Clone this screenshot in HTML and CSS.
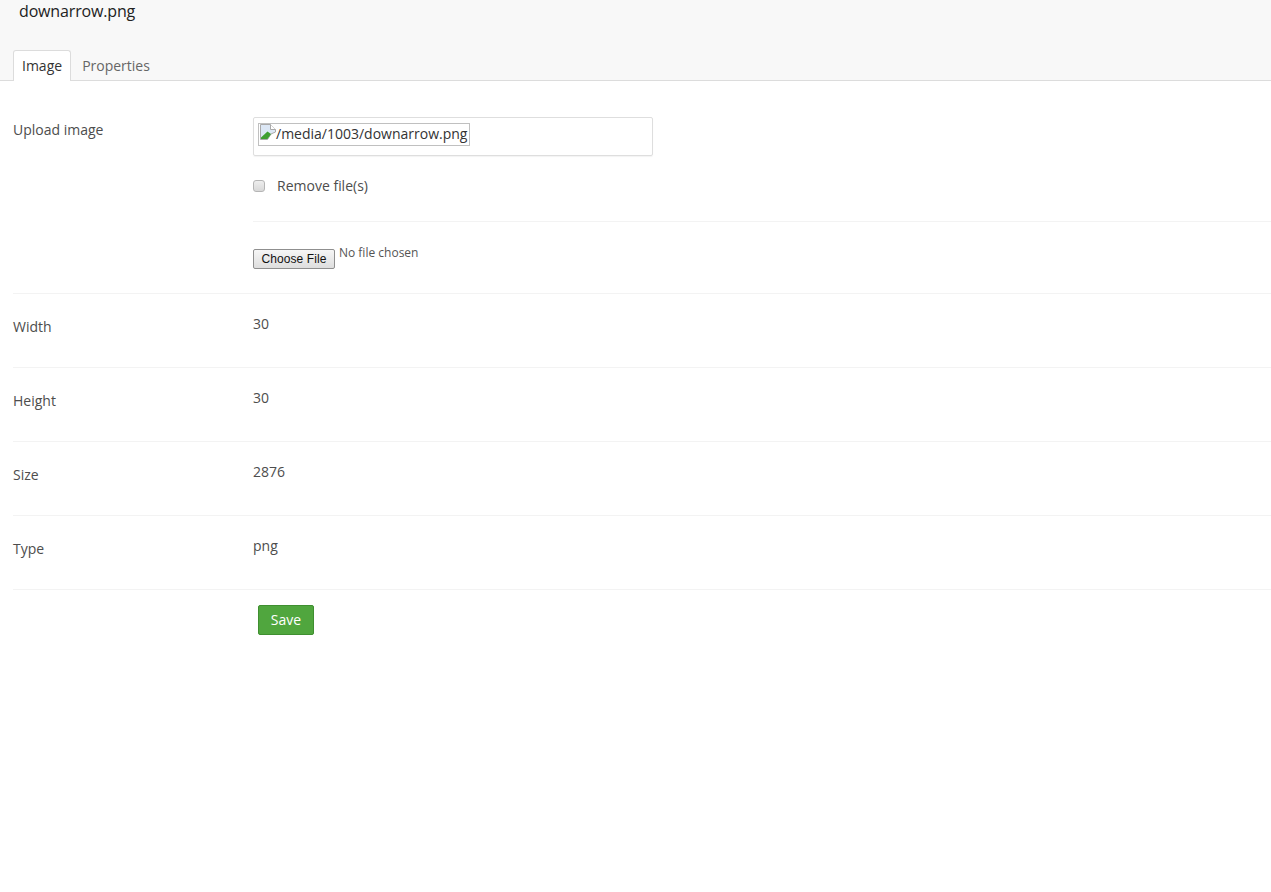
FILE: index.html
```html
<!DOCTYPE html>
<html lang="en">
<head>
<meta charset="utf-8">
<title>downarrow.png</title>
<link rel="stylesheet" href="styles.css">
</head>
<body>
<header class="head">
  <h1 class="title">downarrow.png</h1>
  <nav class="tabs">
    <a class="tab active">Image</a>
    <a class="tab">Properties</a>
  </nav>
</header>
<form class="form">
  <div class="row upload-row">
    <div class="label">Upload image</div>
    <div class="value">
      <div class="preview">
        <span class="broken">
          <svg class="broken-icon" width="16" height="16" viewBox="0 0 16 16">
            <path d="M.5 .5H10.5L15.5 5.5V8L11 10 7.5 15.5H.5Z" fill="#dce7f5" stroke="#a9a9a9"/>
            <path d="M10.5 .5V5.5H15.5" fill="#fff" stroke="#a9a9a9"/>
            <path d="M1 15V13.5L7.5 7.5 11 10 7.5 15Z" fill="#3f9f32"/>
          </svg>/media/1003/downarrow.png</span>
      </div>
      <label class="remove"><input class="check" type="checkbox"><span>Remove file(s)</span></label>
      <div class="file-line">
        <button class="file-btn" type="button">Choose File</button><span class="no-file">No file chosen</span>
      </div>
    </div>
  </div>
  <div class="row"><div class="label">Width</div><div class="value text">30</div></div>
  <div class="row"><div class="label">Height</div><div class="value text">30</div></div>
  <div class="row"><div class="label">Size</div><div class="value text">2876</div></div>
  <div class="row"><div class="label">Type</div><div class="value text">png</div></div>
  <div class="actions"><button class="save" type="button">Save</button></div>
</form>
</body>
</html>
```
FILE: styles.css
```css
html, body { margin: 0; padding: 0; background: #fff; }
body {
  font-family: "Open Sans", sans-serif;
  font-size: 14px;
  line-height: 20px;
  color: #4d4d4d;
  height: 892px;
  overflow: hidden;
}
.head {
  background: #f8f8f8;
  border-bottom: 1px solid #dcdcdc;
  height: 80px;
  display: flex;
  flex-direction: column;
  justify-content: space-between;
  padding-left: 13px;
}
.title {
  margin: 0;
  padding: 0 0 0 6px;
  font-size: 16px;
  font-weight: 400;
  line-height: 22px;
  letter-spacing: -.15px;
  color: #222;
}
.tabs { display: flex; height: 31px; margin-bottom: -1px; }
.tab {
  padding: 5px 8px 0;
  margin-right: 2px;
  border: 1px solid transparent;
  border-bottom: 0;
  color: #666;
  line-height: 20px;
  height: 31px;
  box-sizing: border-box;
}
.tab.active {
  background: #fff;
  border-color: #dcdcdc;
  border-radius: 3px 3px 0 0;
  color: #333;
  height: 31px;
}
.form { margin-left: 13px; }
.row {
  display: flex;
  height: 73px;
  border-bottom: 1px solid #f3f3f3;
}
.upload-row { height: 212px; }
.label { width: 240px; flex: none; padding-top: 23px; color: #4d4d4d; }
.upload-row .label { padding-top: 39px; }
.value { flex: 1; min-width: 0; }
.text { padding-top: 20px; }
.preview {
  box-sizing: border-box;
  width: 400px;
  height: 39px;
  margin-top: 36px;
  padding: 5px 4px;
  border: 1px solid #dedede;
  border-radius: 2px;
  box-shadow: 0 1px 1px rgba(0,0,0,.05);
}
.broken {
  display: inline-flex;
  align-items: flex-start;
  box-sizing: border-box;
  height: 23px;
  padding: 0 2px 0 1px;
  border: 1px solid #c0c0c0;
  color: #333;
  line-height: 20px;
  white-space: nowrap;
}
.broken-icon { flex: none; }
.remove {
  display: flex;
  align-items: center;
  height: 20px;
  margin-top: 20px;
  padding-bottom: 25px;
  border-bottom: 1px solid #f3f3f3;
}
.check {
  appearance: none;
  box-sizing: border-box;
  width: 12px;
  height: 12px;
  margin: 0 12px 0 0;
  border: 1px solid #b5b5b5;
  border-radius: 3px;
  background: linear-gradient(#eee, #d8d8d8);
}
.file-line { display: flex; align-items: flex-start; margin-top: 27px; }
.file-btn {
  box-sizing: border-box;
  width: 82px;
  height: 20px;
  padding: 0;
  border: 1px solid #8f8f8f;
  border-radius: 2px;
  background: linear-gradient(#f6f6f6, #dedede);
  font-family: "Liberation Sans", sans-serif;
  font-size: 12px;
  letter-spacing: .1px;
  line-height: 18px;
  color: #111;
}
.no-file { margin: -4px 0 0 4px; font-size: 12px; line-height: 16px; color: #555; }
.actions { padding: 15px 0 0 245px; }
.save {
  box-sizing: border-box;
  width: 56px;
  height: 30px;
  padding: 0 0 2px;
  border: 1px solid #3f8f30;
  border-radius: 2px;
  background: #50a63e;
  color: #fff;
  font-family: "Open Sans", sans-serif;
  font-size: 14px;
  font-weight: 500;
}
```
